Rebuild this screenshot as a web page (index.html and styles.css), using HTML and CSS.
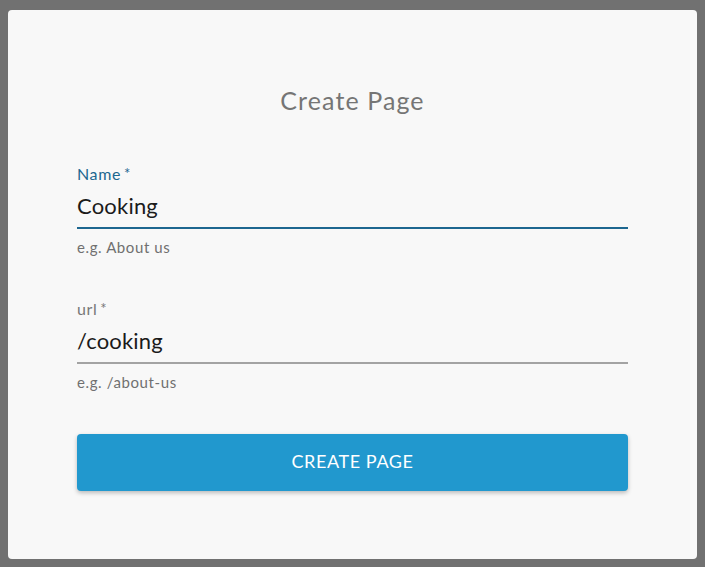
FILE: index.html
```html
<!DOCTYPE html>
<html lang="en">
<head>
    <meta charset="UTF-8">
    <meta name="viewport" content="width=device-width, initial-scale=1.0">
    <title>Create Page</title>
    <link rel="stylesheet" href="styles.css">
</head>
<body>

    <!-- Create page dialog -->
    <div class="dialog">
        <h2 class="dialog-title">Create Page</h2>

        <div class="field focused">
            <label class="field-label" for="pageName">Name<span class="req">*</span></label>
            <input class="field-input" id="pageName" type="text" value="Cooking">
            <div class="field-hint">e.g. About us</div>
        </div>

        <div class="field">
            <label class="field-label" for="pageUrl">url<span class="req">*</span></label>
            <input class="field-input" id="pageUrl" type="text" value="/cooking">
            <div class="field-hint">e.g. /about-us</div>
        </div>

        <button class="create-btn">CREATE PAGE</button>
    </div>

</body>
</html>
```

FILE: styles.css
```css
body {
    margin: 0;
    padding: 10px 8px 8px 8px;
    background-color: #717171;
    font-family: Lato, "Open Sans", sans-serif;
}

.dialog {
    background-color: #f8f8f8;
    border-radius: 4px;
    padding: 74px 69px 68px 69px;
    display: flex;
    flex-direction: column;
}

.dialog-title {
    margin: 0 0 48px 0;
    font-size: 25px;
    line-height: 32px;
    font-weight: normal;
    letter-spacing: 1.1px;
    color: #757575;
    text-align: center;
}

.field {
    display: flex;
    flex-direction: column;
    margin-bottom: 42px;
}

.field-label {
    font-size: 16px;
    line-height: 20px;
    letter-spacing: 0.6px;
    color: #777;
}

.req {
    margin-left: 3px;
    font-size: 15px;
    vertical-align: top;
    line-height: 18px;
}

.field-input {
    font-family: inherit;
    font-size: 22px;
    line-height: 30px;
    height: 45px;
    padding: 7px 0 8px 0;
    box-sizing: border-box;
    border: none;
    border-bottom: 2px solid #a3a3a3;
    background: transparent;
    color: #1b1b1b;
    letter-spacing: 0.2px;
    outline: none;
}

.field-hint {
    margin-top: 8px;
    font-size: 15px;
    line-height: 20px;
    letter-spacing: 0.6px;
    color: #707070;
}

.focused .field-label {
    color: #1d6790;
}

.focused .field-input {
    border-bottom-color: #1d6790;
}

.create-btn {
    height: 57px;
    flex-shrink: 0;
    padding: 0 0 4px 0;
    border: none;
    border-radius: 4px;
    background-color: #2198ce;
    color: white;
    font-family: inherit;
    font-size: 18px;
    letter-spacing: 0.6px;
    box-shadow: 0 2px 4px rgba(0, 0, 0, 0.25);
    cursor: pointer;
}
```
